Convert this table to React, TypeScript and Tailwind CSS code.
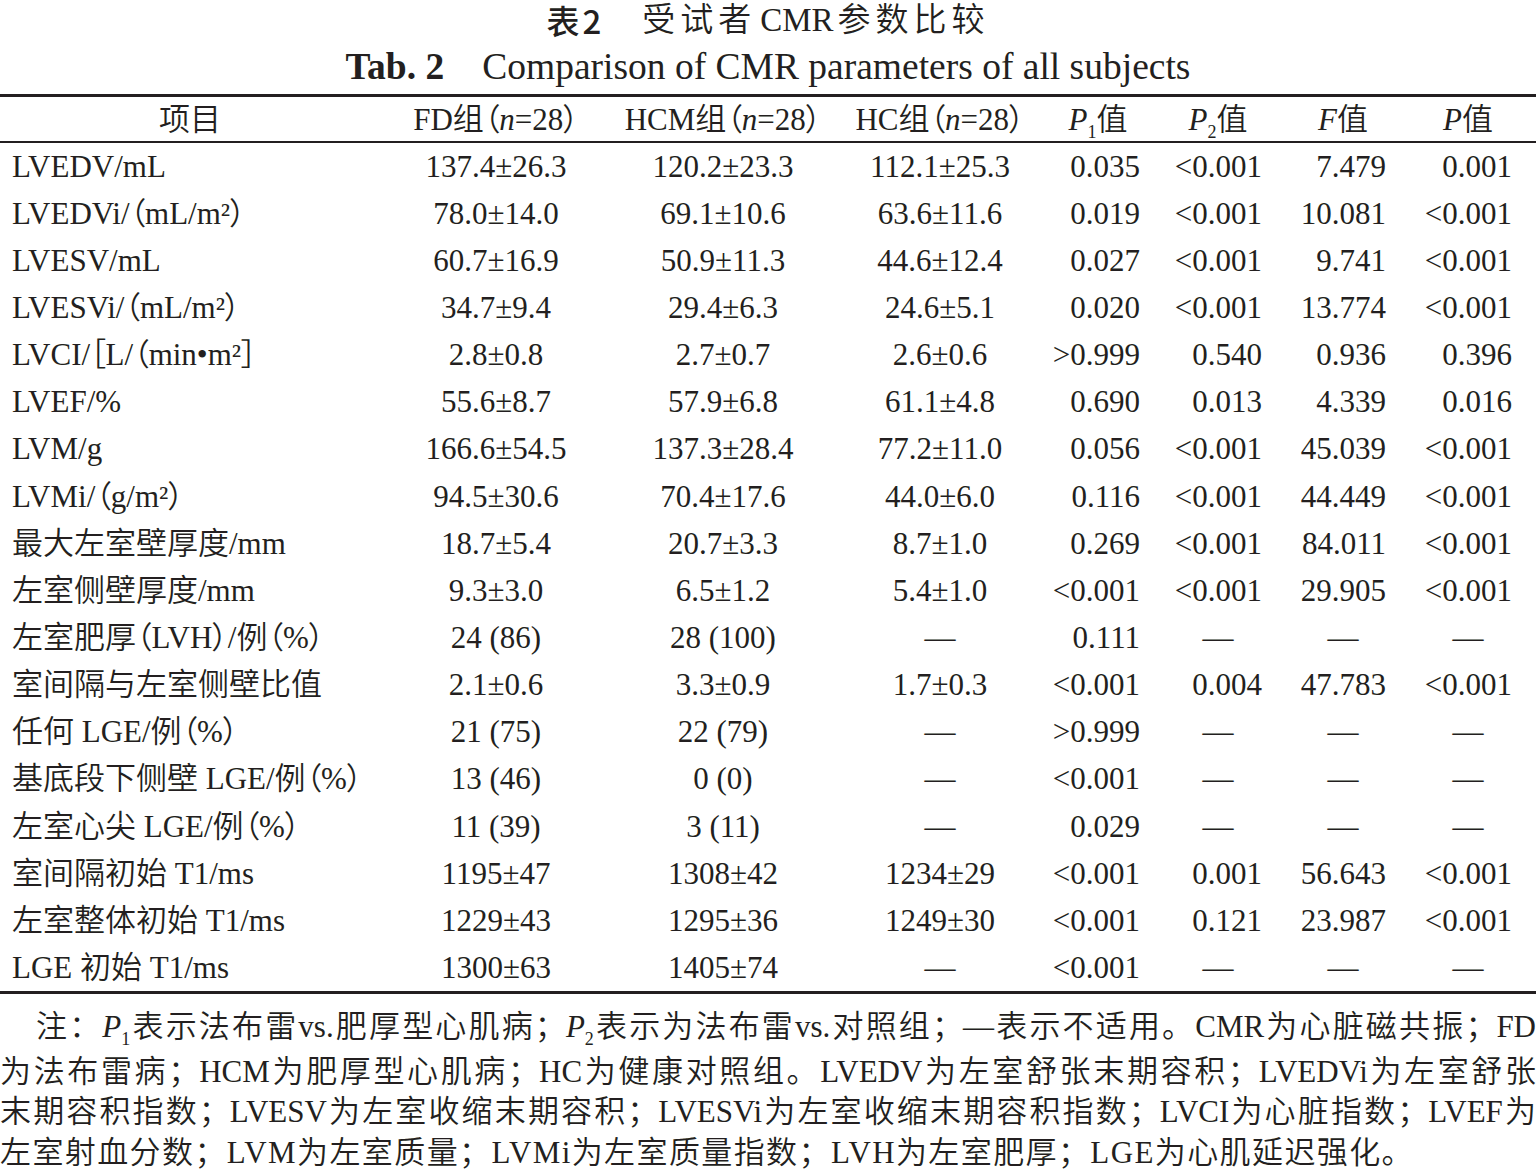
const rows: string[][] = [
  ["LVEDV/mL", "137.4±26.3", "120.2±23.3", "112.1±25.3", "0.035", "<0.001", "7.479", "0.001"],
  ["LVEDVi/（mL/m²）", "78.0±14.0", "69.1±10.6", "63.6±11.6", "0.019", "<0.001", "10.081", "<0.001"],
  ["LVESV/mL", "60.7±16.9", "50.9±11.3", "44.6±12.4", "0.027", "<0.001", "9.741", "<0.001"],
  ["LVESVi/（mL/m²）", "34.7±9.4", "29.4±6.3", "24.6±5.1", "0.020", "<0.001", "13.774", "<0.001"],
  ["LVCI/［L/（min•m²］", "2.8±0.8", "2.7±0.7", "2.6±0.6", ">0.999", "0.540", "0.936", "0.396"],
  ["LVEF/%", "55.6±8.7", "57.9±6.8", "61.1±4.8", "0.690", "0.013", "4.339", "0.016"],
  ["LVM/g", "166.6±54.5", "137.3±28.4", "77.2±11.0", "0.056", "<0.001", "45.039", "<0.001"],
  ["LVMi/（g/m²）", "94.5±30.6", "70.4±17.6", "44.0±6.0", "0.116", "<0.001", "44.449", "<0.001"],
  ["最大左室壁厚度/mm", "18.7±5.4", "20.7±3.3", "8.7±1.0", "0.269", "<0.001", "84.011", "<0.001"],
  ["左室侧壁厚度/mm", "9.3±3.0", "6.5±1.2", "5.4±1.0", "<0.001", "<0.001", "29.905", "<0.001"],
  ["左室肥厚（LVH）/例（%）", "24 (86)", "28 (100)", "—", "0.111", "—", "—", "—"],
  ["室间隔与左室侧壁比值", "2.1±0.6", "3.3±0.9", "1.7±0.3", "<0.001", "0.004", "47.783", "<0.001"],
  ["任何 LGE/例（%）", "21 (75)", "22 (79)", "—", ">0.999", "—", "—", "—"],
  ["基底段下侧壁 LGE/例（%）", "13 (46)", "0 (0)", "—", "<0.001", "—", "—", "—"],
  ["左室心尖 LGE/例（%）", "11 (39)", "3 (11)", "—", "0.029", "—", "—", "—"],
  ["室间隔初始 T1/ms", "1195±47", "1308±42", "1234±29", "<0.001", "0.001", "56.643", "<0.001"],
  ["左室整体初始 T1/ms", "1229±43", "1295±36", "1249±30", "<0.001", "0.121", "23.987", "<0.001"],
  ["LGE 初始 T1/ms", "1300±63", "1405±74", "—", "<0.001", "—", "—", "—"],
];

// right padding of the p/F columns, dashes stay centered
const pr = ["pr-[10px]", "pr-[24px]", "pr-[14px]", "pr-[24px]"];

const cols = "grid grid-cols-[380px_232px_222px_212px_104px_136px_114px_136px]";

function Sub({ n }: { n: string }) {
  return <span className="relative top-[8px] text-[18px] not-italic">{n}</span>;
}

export default function App() {
  return (
    <div className="w-[1536px] min-h-[1175px] bg-white text-[#231f20] font-['Liberation_Serif','Noto_Sans_CJK_SC',serif] font-[350]">
      {/* titles */}
      <div className="h-[40px] flex items-center justify-center text-[33px] leading-none whitespace-nowrap">
        <span className="font-['Noto_Sans_CJK_SC',sans-serif] font-medium tracking-[3px] mr-[38px]">表2</span>
        <span className="tracking-[5px]">受试者</span>
        <span className="mx-[4px]">CMR</span>
        <span className="tracking-[5px]">参数比较</span>
      </div>
      <div className="h-[54px] flex items-center justify-center text-[37.5px] leading-none whitespace-nowrap">
        <span className="font-bold mr-[38px]">Tab. 2</span>
        <span>Comparison of CMR parameters of all subjects</span>
      </div>

      <div className="h-[3px] bg-[#231f20]" />

      {/* header */}
      <div className={`${cols} h-[44px] items-center text-[31px] text-center leading-none whitespace-nowrap [font-feature-settings:'palt']`}>
        <div>项目</div>
        <div>FD组（<i>n</i>=28）</div>
        <div>HCM组（<i>n</i>=28）</div>
        <div>HC组（<i>n</i>=28）</div>
        <div><i>P</i><Sub n="1" />值</div>
        <div><i>P</i><Sub n="2" />值</div>
        <div><i>F</i>值</div>
        <div><i>P</i>值</div>
      </div>
      <div className="h-[1.5px] bg-[#231f20]" />

      {/* body */}
      <div className="text-[31px] leading-none">
        {rows.map((r, i) => (
          <div key={i} className={`${cols} h-[47.15px] items-center`}>
            <div className="pl-[12px] whitespace-nowrap [font-feature-settings:'palt']">{r[0]}</div>
            <div className="text-center">{r[1]}</div>
            <div className="text-center">{r[2]}</div>
            <div className="text-center">{r[3]}</div>
            {r.slice(4).map((v, j) => (
              <div key={j} className={v === "—" ? "text-center" : `text-right ${pr[j]}`}>
                {v}
              </div>
            ))}
          </div>
        ))}
      </div>

      <div className="h-[3px] bg-[#231f20]" />

      {/* notes */}
      <div className="pt-[13px] text-[31px] leading-[40.7px] text-justify">
        <div className="pl-[36px] [text-align-last:justify]">
          注：<i>P</i><Sub n="1" />表示法布雷vs.肥厚型心肌病；<i>P</i><Sub n="2" />表示为法布雷vs.对照组；—表示不适用。CMR为心脏磁共振；FD
        </div>
        <div className="[text-align-last:justify]">
          为法布雷病；HCM为肥厚型心肌病；HC为健康对照组。LVEDV为左室舒张末期容积；LVEDVi为左室舒张
        </div>
        <div className="[text-align-last:justify]">
          末期容积指数；LVESV为左室收缩末期容积；LVESVi为左室收缩末期容积指数；LVCI为心脏指数；LVEF为
        </div>
        <div className="tracking-[1.4px]">左室射血分数；LVM为左室质量；LVMi为左室质量指数；LVH为左室肥厚；LGE为心肌延迟强化。</div>
      </div>
    </div>
  );
}
